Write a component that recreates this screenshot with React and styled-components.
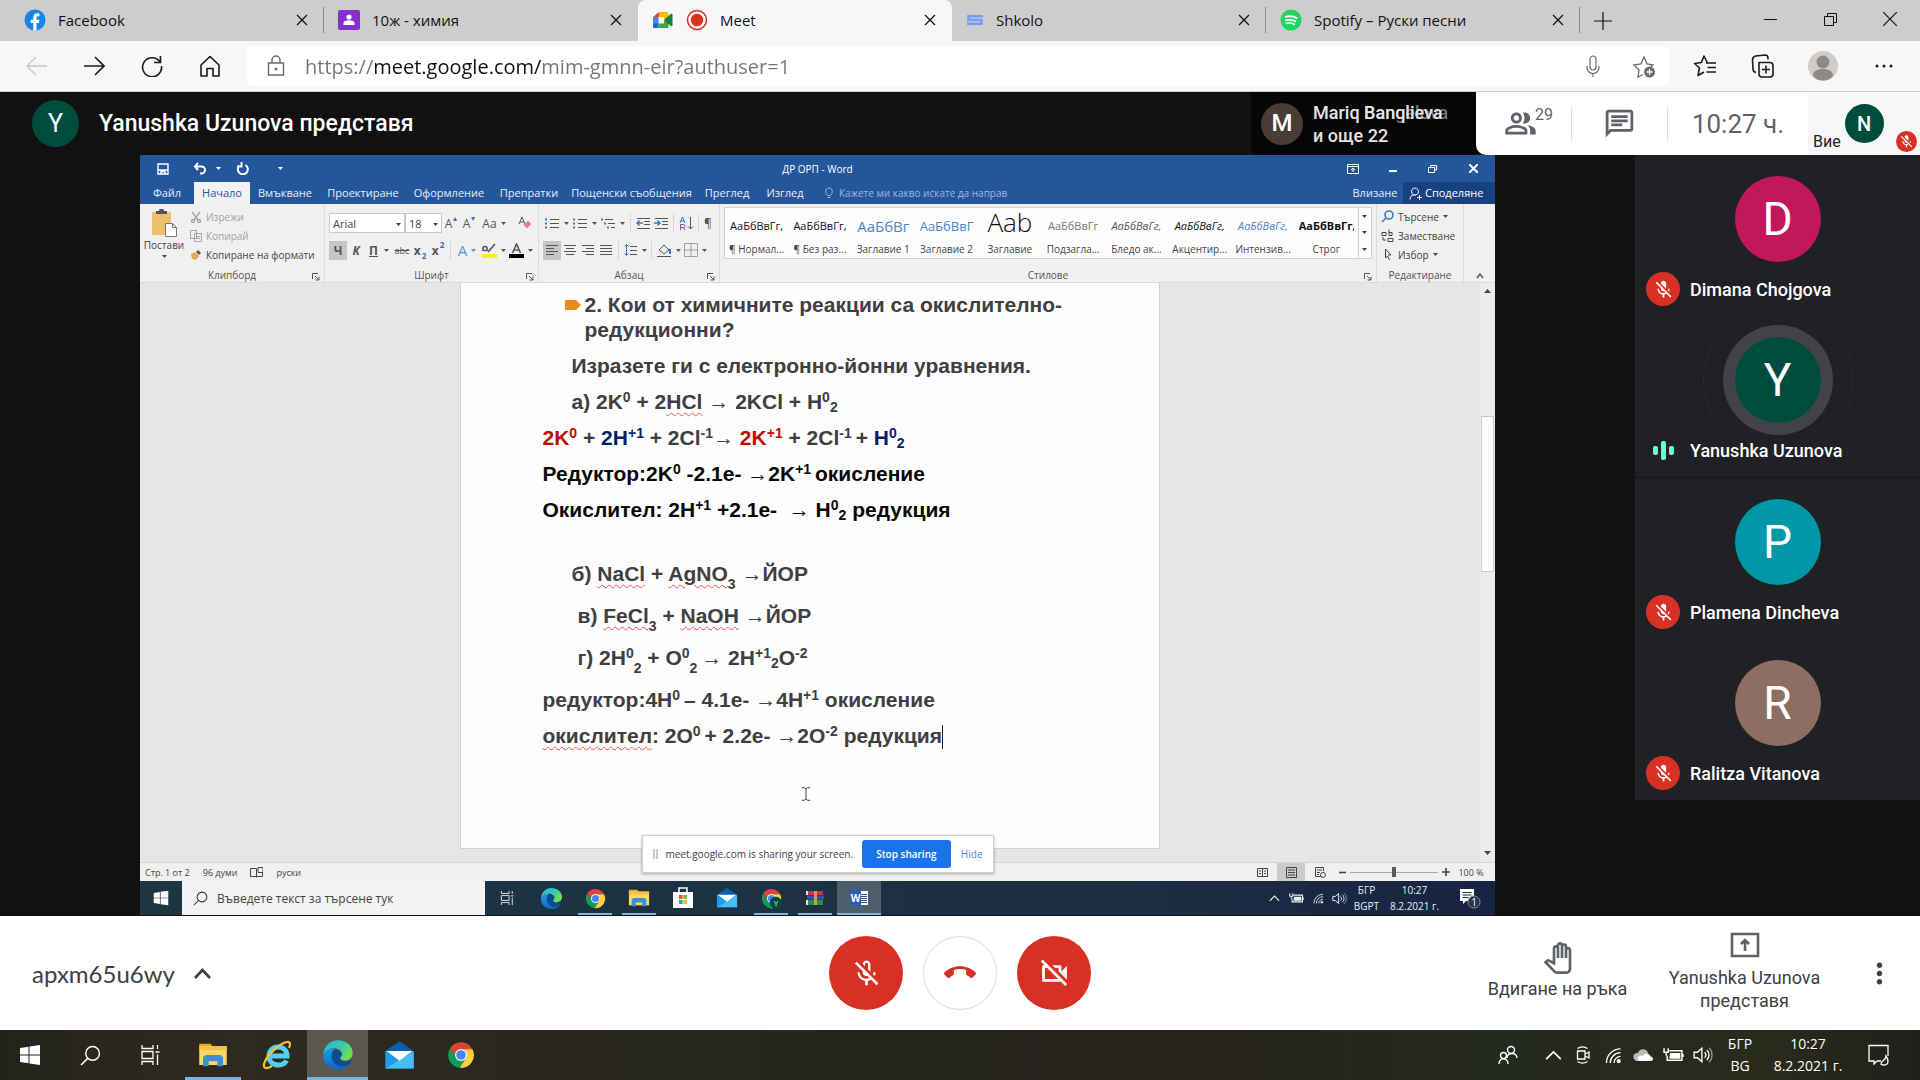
import React from 'react';
import styled, { createGlobalStyle, css } from 'styled-components';
import {
  MdOutlineMicOff,
  MdMicOff,
  MdCallEnd,
  MdOutlineVideocamOff,
  MdOutlinePeopleAlt,
  MdOutlineChat,
  MdMoreVert,
  MdOutlinePanTool,
} from 'react-icons/md';

const ui = `'Open Sans', 'Noto Sans', sans-serif`;
const meet = `Roboto, 'Liberation Sans', sans-serif`;

const GlobalStyle = createGlobalStyle`
  * {
    box-sizing: border-box;
  }

  body {
    margin: 0;
    background: #111;
    font-family: ${ui};
  }

  button, input, select {
    font: inherit;
    color: inherit;
    margin: 0;
    padding: 0;
    border: none;
    border-radius: 0;
    background: none;
    outline: none;
  }

  h1, h2, p, ul {
    margin: 0;
    padding: 0;
    font-weight: inherit;
    font-size: inherit;
  }

  a {
    color: inherit;
    text-decoration: none;
  }
`;

const Screen = styled.div`
  display: flex;
  flex-direction: column;
  min-height: 100vh;
`;

const Line = styled.svg`
  display: block;
  flex: none;
  fill: none;
  stroke: currentColor;
  stroke-width: ${(p) => p.$stroke || 1};
  stroke-linejoin: ${(p) => (p.$round ? 'round' : 'miter')};
`;

const Logo = styled.svg`
  display: block;
  flex: none;
`;

const Icon = ({ d, size = 20, box = 20, stroke, round, children }) => (
  <Line width={size} height={size} viewBox={`0 0 ${box} ${box}`} $stroke={stroke} $round={round}>
    {d && <path d={d} />}
    {children}
  </Line>
);

/* ---------- logos ---------- */

const EdgeLogo = ({ size = 32, id }) => (
  <Logo width={size} height={size} viewBox="0 0 24 24">
    <defs>
      <linearGradient id={`${id}a`} x1="0" y1="0" x2="1" y2="0.5">
        <stop offset="0" stopColor="#2bb3e6" />
        <stop offset="0.6" stopColor="#36c9b4" />
        <stop offset="1" stopColor="#6fe04d" />
      </linearGradient>
      <linearGradient id={`${id}b`} x1="0" y1="0" x2="0.4" y2="1">
        <stop offset="0" stopColor="#1b9de2" />
        <stop offset="1" stopColor="#1464c0" />
      </linearGradient>
    </defs>
    <path fill="#0c4a91" d="M9 8c3.500 0 5.500 1.500 6 4-1 1.500-1.500 3 0 4 2 1.200 5 1 6.500-.200 1 .300.600 1.200 0 2.200-2.500 3-8 4-12 1C6 16 6 10 9 8z" />
    <path fill={`url(#${id}b)`} d="M1 12.500C1 9.300 5 7 9.500 7.400 7.300 9 6.600 12 7.500 15c1.200 3.600 4.300 5.500 7.500 5.500 2.700 0 4.900-.8 6.500-2.500C19.500 21.200 16 23 12 23 6 23 1 18.500 1 12.500z" />
    <path fill={`url(#${id}a)`} d="M12 1c6.200 0 11 4.400 11 9.500 0 3.500-2.700 5.700-5.800 5.700-2.700 0-3.900-1.100-3.400-2.300.6-.8 1.200-1.500 1.200-2.600C15 8.900 12.500 7 9 7c-4.500 0-8 3-8 5.500C.8 6 5.700 1 12 1z" />
  </Logo>
);

const ChromeLogo = ({ size = 26, badge }) => (
  <Logo width={size} height={size} viewBox="0 0 24 24">
    <path fill="#db4437" d="M12 7h9.800A11 11 0 0 0 2.600 6.300L7.700 14.500A5 5 0 0 1 12 7z" />
    <path fill="#0f9d58" d="M2.600 6.300A11 11 0 0 0 11 23l5.300-8.500a5 5 0 0 1-8.600 0z" />
    <path fill="#ffcd40" d="M21.800 7A11 11 0 0 1 11 23l5.300-8.500A5 5 0 0 0 12 7z" />
    <circle cx="12" cy="12" r="5.200" fill="#fff" />
    <circle cx="12" cy="12" r="4.100" fill="#4285f4" />
    {badge && <circle cx="17" cy="17" r="7" fill="#004d40" />}
    {badge && <text x="17" y="20" fontSize="9" textAnchor="middle" fill="#cfe">{badge}</text>}
  </Logo>
);

const FolderLogo = ({ size = 30 }) => (
  <Logo width={size} height={size} viewBox="0 0 24 24">
    <path fill="#e9a820" d="M1 3h9l2 2.500H1z" />
    <path fill="#fdd663" d="M1 5h22v15H1z" />
    <path fill="#f7c242" d="M1 5h22v3H1z" />
    <path fill="#3c8fd0" d="M4 21v-7.500L6 12h12l2 1.500V21h-4.500v-4h-7v4z" />
  </Logo>
);

const MailLogo = ({ size = 32 }) => (
  <Logo width={size} height={size} viewBox="0 0 24 24">
    <path fill="#0a5fb4" d="M12 1l11 7.500H1z" />
    <path fill="#1e9be8" d="M1 8.500h22V22H1z" />
    <path fill="#46bdf2" d="M1 22L23 9v13z" />
    <path fill="#fff" d="M2 8.500h20L12 16z" />
  </Logo>
);

const ExplorerLogo = () => (
  <Logo width="32" height="32" viewBox="0 0 32 32">
    <path fill="none" stroke="#4fd0f5" strokeWidth="5" d="M8 17h18c0-6-4-9-9-9-5.500 0-9 4-9 9 0 5.500 4 9 9.500 9 3.500 0 6.500-1.500 8-4.500" />
    <path fill="none" stroke="#f4c430" strokeWidth="2.200" d="M28 9c2-4 1-6.500-2-6C19 4 5 17 3 25c-1 5 3 5 8 2" />
  </Logo>
);

const WindowsLogo = ({ size = 22 }) => (
  <Logo width={size} height={size} viewBox="0 0 22 22">
    <path fill="#fff" d="M1 4l8.500-1.300v7.800H1zM10.500 2.500L21 1v9.500H10.500zM1 11.500h8.500v7.800L1 18zM10.500 11.500H21V21l-10.500-1.500z" />
  </Logo>
);

const StoreLogo = () => (
  <Logo width="24" height="24" viewBox="0 0 24 24">
    <path fill="none" stroke="#fff" strokeWidth="1.600" d="M8 7V2h8v5" />
    <path fill="#fff" d="M2 6h20v16H2z" />
    <path fill="#e8572a" d="M8 9h3.600v4H8z" />
    <path fill="#7db83b" d="M12.400 9H16v4h-3.600z" />
    <path fill="#1f9bd8" d="M8 14h3.600v4H8z" />
    <path fill="#f5b51d" d="M12.400 14H16v4h-3.600z" />
  </Logo>
);

const ArchiveLogo = () => (
  <Logo width="20" height="20" viewBox="0 0 20 20">
    <path fill="#b73a4e" d="M1 3h17v4H1z" />
    <path fill="#3d4fae" d="M2 7.500h17v4H2z" />
    <path fill="#2c8a4b" d="M1 12h17v5H1z" />
    <path fill="#c9a24a" d="M9 3h3v14H9z" />
    <path fill="#dfe3ea" d="M1 3h2v4H1zM1 12h2v5H1z" />
  </Logo>
);

const WordLogo = () => (
  <Logo width="20" height="20" viewBox="0 0 20 20">
    <path fill="#f4f7fb" d="M10 3h9v14h-9z" />
    <path stroke="#2b579a" fill="none" d="M12 6.500h6M12 8.500h6M12 10.500h6M12 12.500h6M12 14.500h6" />
    <path fill="#2b5fb0" d="M1 2.500L12 0v20L1 17.500z" />
    <text x="6.500" y="14" fontSize="10" fontWeight="700" textAnchor="middle" fill="#fff">W</text>
  </Logo>
);

const FacebookLogo = () => (
  <Logo width="22" height="22" viewBox="0 0 22 22">
    <circle cx="11" cy="11" r="10.500" fill="#1384f2" />
    <path fill="#fff" d="M9.300 21.400v-7.500H6.600v-3.100h2.700V8.500c0-2.800 1.600-4.200 4-4.200.9 0 1.700.1 2.200.2v2.700h-1.500c-1.200 0-1.500.7-1.500 1.600v2h2.900l-.5 3.100h-2.400v7.500a10 10 0 0 1-3.200 0z" />
  </Logo>
);

const ClassLogo = () => (
  <Logo width="22" height="22" viewBox="0 0 22 22">
    <rect x="0" y="1" width="22" height="20" rx="2" fill="#8430ce" />
    <circle cx="11" cy="8" r="2.600" fill="#fff" />
    <path fill="#fff" d="M5.500 16v-2c0-1.800 3-2.800 5.500-2.800s5.500 1 5.500 2.800v2z" />
  </Logo>
);

const MeetLogo = () => (
  <Logo width="22" height="22" viewBox="0 0 22 22">
    <path fill="#ea4335" d="M1 8l6-5v5z" />
    <path fill="#fbbc04" d="M7 3h8c1 0 1.500.6 1.500 1.500V9L12 11V8H7z" />
    <path fill="#4285f4" d="M1 8h5.500v7H1z" />
    <path fill="#1967d2" d="M1 14.500h5.500V19H2.500C1.500 19 1 18.500 1 17.500z" />
    <path fill="#34a853" d="M6.500 14.500H12v-3l4.500 2v4c0 1-.5 1.500-1.500 1.500H6.500z" />
    <path fill="#188038" d="M12 11l6.700-6c.7-.6 1.800-.3 1.800.8v10.500c0 1-1.100 1.300-1.800.7z" />
  </Logo>
);

const RecordLogo = () => (
  <Logo width="22" height="22" viewBox="0 0 22 22">
    <circle cx="11" cy="11" r="9.500" fill="none" stroke="#d93025" strokeWidth="1.500" />
    <circle cx="11" cy="11" r="6.200" fill="#d93025" />
  </Logo>
);

const ShkoloLogo = () => (
  <Logo width="18" height="18" viewBox="0 0 18 18">
    <path fill="none" stroke="#6f9df7" strokeWidth="2.600" d="M17 5.300H2.500V9h13v3.700H1" />
  </Logo>
);

const SpotifyLogo = () => (
  <Logo width="22" height="22" viewBox="0 0 22 22">
    <circle cx="11" cy="11" r="10.500" fill="#1ed760" />
    <path fill="none" stroke="#fff" strokeLinecap="round" strokeWidth="1.900" d="M5.500 7.800c3.600-1 7.800-.7 11 1.200M6 11.200c3-.9 6.500-.5 9.300 1.100M6.500 14.300c2.500-.7 5.200-.4 7.600 1" />
  </Logo>
);

/* ---------- browser ---------- */

const TabStrip = styled.nav`
  display: flex;
  align-items: flex-end;
  height: 41px;
  padding-left: 10px;
  background: #cdcdcd;
  font-size: 15px;
  color: #111;
`;

const Tab = styled.div`
  display: flex;
  align-items: center;
  gap: 12px;
  flex: 0 1 314px;
  min-width: 0;
  height: 41px;
  padding: 0 12px 2px 14px;
  ${(p) =>
    p.$active &&
    css`
      background: #f7f7f7;
      border-radius: 8px 8px 0 0;
    `}
`;

const TabTitle = styled.a`
  flex: 1;
  white-space: nowrap;
  overflow: hidden;
`;

const TabDivider = styled.i`
  width: 1px;
  height: 26px;
  margin: 0 0 8px -1px;
  background: #8c8c8c;
`;

const PlainButton = styled.button`
  display: flex;
  align-items: center;
  justify-content: center;
  flex: none;
  width: ${(p) => p.$w || 20}px;
  height: ${(p) => p.$h || 38}px;
  color: ${(p) => p.$color || 'inherit'};
`;

const WindowButtons = styled.div`
  display: flex;
  margin-left: auto;
  align-self: flex-start;
`;

const Toolbar = styled.div`
  display: flex;
  align-items: center;
  height: 51px;
  padding: 0 6px 0 7px;
  background: #f7f7f7;
  border-bottom: 1px solid #d0d0d0;
  color: #1b1b1b;
`;

const AddressBar = styled.form`
  display: flex;
  align-items: center;
  flex: 1;
  height: 40px;
  margin: 0 7px 0 8px;
  padding-left: 18px;
  border-radius: 6px;
  background: #fff;
  color: #6b6b6b;
`;

/* host part of the address is darker than the rest */
const Address = styled.input`
  flex: 1;
  min-width: 0;
  margin-left: 18px;
  height: 38px;
  font-size: 20px;
  color: transparent;
  background: linear-gradient(90deg, #757575 69px, #111 69px, #111 237px, #757575 237px);
  background-clip: text;
  -webkit-background-clip: text;
`;

const tabs = [
  { title: 'Facebook', logo: <FacebookLogo />, divider: true },
  { title: '10ж - химия', logo: <ClassLogo /> },
  { title: 'Meet', logo: <MeetLogo />, extra: <RecordLogo />, active: true },
  { title: 'Shkolo', logo: <ShkoloLogo />, divider: true },
  { title: 'Spotify – Руски песни', logo: <SpotifyLogo />, divider: true },
];

const cross = 'M1 1l10 10M11 1L1 11';

function Browser() {
  return (
    <header>
      <TabStrip>
        {tabs.map((tab) => (
          <React.Fragment key={tab.title}>
            <Tab $active={tab.active}>
              {tab.logo}
              {tab.extra}
              <TabTitle href="#">{tab.title}</TabTitle>
              <PlainButton aria-label="Затваряне на раздела">
                <Icon d={cross} size={12} box={12} stroke={1.3} />
              </PlainButton>
            </Tab>
            {tab.divider && <TabDivider />}
          </React.Fragment>
        ))}
        <PlainButton $w={46} $h={41} aria-label="Нов раздел">
          <Icon d="M9 0v18M0 9h18" size={18} box={18} stroke={1.2} />
        </PlainButton>
        <WindowButtons>
          <PlainButton $w={60} aria-label="Намаляване">
            <Icon d="M0 6.500h13" size={13} box={13} />
          </PlainButton>
          <PlainButton $w={60} aria-label="Възстановяване">
            <Icon d="M.5 3.500h9v9h-9zM3.500 3.500v-3h9v9h-3" size={13} box={13} />
          </PlainButton>
          <PlainButton $w={60} aria-label="Затваряне">
            <Icon d="M0 0l14 14M14 0L0 14" size={14} box={14} stroke={1.2} />
          </PlainButton>
        </WindowButtons>
      </TabStrip>
      <Toolbar>
        <PlainButton $w={58} $color="#c8c8c8" aria-label="Назад">
          <Icon d="M22 11H2M11 2l-9 9 9 9" size={22} box={22} stroke={1.4} />
        </PlainButton>
        <PlainButton $w={58} aria-label="Напред">
          <Icon d="M1 11h20M12 2l9 9-9 9" size={22} box={22} stroke={1.6} />
        </PlainButton>
        <PlainButton $w={58} aria-label="Презареждане">
          <Icon d="M19 7A9.500 9.500 0 1 0 20.500 11M19.500 1v6.500H13" size={22} box={22} stroke={1.6} />
        </PlainButton>
        <PlainButton $w={58} aria-label="Начало">
          <Icon d="M2 10L11 1.500l9 8.500v11h-6v-7.500H8V21H2z" size={22} box={22} stroke={1.6} round />
        </PlainButton>
        <AddressBar>
          <Icon size={22} box={22} stroke={1.4} d="M3.500 8h15v12h-15zM7 8V5a4 4 0 0 1 8 0v3">
            <circle cx="11" cy="14" r=".8" fill="currentColor" />
          </Icon>
          <Address aria-label="Адрес" defaultValue="https://meet.google.com/mim-gmnn-eir?authuser=1" />
          <PlainButton $w={51} type="button" aria-label="Микрофон">
            <Icon size={22} box={22} stroke={1.2} d="M8 4a3 3 0 0 1 6 0v8a3 3 0 0 1-6 0zM5 11v1.500a6 6 0 0 0 12 0V11M11 18.500V22" />
          </PlainButton>
          <PlainButton $w={51} type="button" aria-label="Добавяне в любими">
            <Icon size={24} box={24} stroke={1.3}>
              <path d="M11 20.500l-5 2.500 1-7-5-5 7-1 3-7 3 7 6 1-3 3" />
              <circle cx="17.500" cy="18" r="5.500" fill="currentColor" stroke="none" />
              <path d="M17.500 15v6M14.500 18h6" stroke="#fff" />
            </Icon>
          </PlainButton>
        </AddressBar>
        <PlainButton $w={58} aria-label="Любими">
          <Icon size={24} box={24} stroke={1.6} round d="M14.500 9L11 2 8.300 8.500 1.500 9.500 6.500 14 5 21.500l6-3.500M13 9h10M14.500 13.500H23M13.500 18H23" />
        </PlainButton>
        <PlainButton $w={58} aria-label="Колекции">
          <Icon size={24} box={24} stroke={1.6} round d="M8 8.500h11c2 0 3 1 3 3V20c0 2-1 3-3 3h-8c-2 0-3-1-3-3zM15 11.500v8M11 15.500h8M5 18.500c-2-.5-3-2-3-3.500L1.500 6c0-2 1-3.500 3-4L14 1c1.500 0 3 1 3 3v1.500" />
        </PlainButton>
        <PlainButton $w={61} aria-label="Профил">
          <Logo width="30" height="30" viewBox="0 0 30 30">
            <circle cx="15" cy="15" r="15" fill="#cfccca" />
            <circle cx="15" cy="11" r="6.500" fill="#8f8a86" />
            <path fill="#8f8a86" d="M5 25c0-5 4-7 10-7s10 2 10 7c-5 6-15 6-20 0z" />
          </Logo>
        </PlainButton>
        <PlainButton $w={61} aria-label="Още">
          <Icon size={20} box={20}>
            <g fill="currentColor" stroke="none">
              <circle cx="3" cy="10" r="1.500" />
              <circle cx="10" cy="10" r="1.500" />
              <circle cx="17" cy="10" r="1.500" />
            </g>
          </Icon>
        </PlainButton>
      </Toolbar>
    </header>
  );
}

/* ---------- meet header ---------- */

const MeetHeader = styled.div`
  display: flex;
  align-items: stretch;
  height: 63px;
  background: #111;
  font-family: ${meet};
`;

const Avatar = styled.span`
  display: flex;
  align-items: center;
  justify-content: center;
  flex: none;
  width: ${(p) => p.$size}px;
  height: ${(p) => p.$size}px;
  border-radius: 50%;
  background: ${(p) => p.$color};
  color: #fff;
  font-size: ${(p) => p.$font}px;
  font-weight: ${(p) => p.$weight || 400};
`;

const Presenter = styled.h1`
  display: flex;
  align-items: center;
  gap: 20px;
  padding-left: 32px;
  color: #fff;
  font-size: 23px;
  font-weight: 500;
`;

const MoreTile = styled.div`
  display: flex;
  align-items: center;
  gap: 10px;
  width: 225px;
  margin-left: auto;
  padding-left: 10px;
  border-radius: 0 0 0 8px;
  background: #060606;
  color: #e3e3e3;
  font-size: 18px;
  font-weight: 500;
  line-height: 23px;
`;

/* old name fading out under the new one */
const Swap = styled.span`
  position: relative;

  span {
    position: absolute;
    left: 0;
    top: -1px;
    opacity: 0.5;
  }
`;

const InfoPanel = styled.div`
  display: flex;
  align-items: center;
  width: 332px;
  border-radius: 0 0 0 10px;
  background: #fff;
  color: #5f6368;
  box-shadow: -10px 0 0 -1px #060606;
`;

const InfoButton = styled.button`
  display: flex;
  align-items: center;
  justify-content: center;
  width: 96px;
  height: 34px;
  padding-left: ${(p) => (p.$counted ? 10 : 0)}px;
  border-right: 1px solid #e0e0e0;

  sup {
    align-self: flex-start;
    margin-left: -2px;
    font-size: 16px;
    line-height: 16px;
  }
`;

const Clock = styled.time`
  flex: 1;
  text-align: center;
  font-size: 26px;
`;

const SelfTile = styled.div`
  display: flex;
  align-items: center;
  gap: 4px;
  position: relative;
  width: 112px;
  padding-left: 5px;
  background: #f6f7f9;
  color: #202124;
  font-size: 16px;

  b {
    align-self: flex-end;
    padding-bottom: 4px;
    font-weight: 400;
  }
`;

const MutedBadge = styled.span`
  display: flex;
  align-items: center;
  justify-content: center;
  flex: none;
  width: ${(p) => p.$size}px;
  height: ${(p) => p.$size}px;
  border-radius: 50%;
  background: #d93025;
  color: #fff;
`;

const CornerBadge = styled(MutedBadge)`
  position: absolute;
  right: 3px;
  bottom: 3px;
`;

function MeetTop() {
  return (
    <MeetHeader>
      <Presenter>
        <Avatar $size={47} $color="#004d40" $font={25}>Y</Avatar>
        Yanushka Uzunova представя
      </Presenter>
      <MoreTile>
        <Avatar $size={42} $color="#4a3b35" $font={24} $weight={500}>M</Avatar>
        <div>
          Mariq <Swap>Banqlieva<span>Bangelova</span></Swap>
          <br />и още 22
        </div>
      </MoreTile>
      <InfoPanel>
        <InfoButton $counted>
          <MdOutlinePeopleAlt size={33} />
          <sup>29</sup>
        </InfoButton>
        <InfoButton aria-label="Чат">
          <MdOutlineChat size={33} />
        </InfoButton>
        <Clock>10:27 ч.</Clock>
      </InfoPanel>
      <SelfTile>
        <b>Вие</b>
        <Avatar $size={39} $color="#004d40" $font={20} $weight={500}>N</Avatar>
        <CornerBadge $size={21}><MdMicOff size={15} /></CornerBadge>
      </SelfTile>
    </MeetHeader>
  );
}

/* ---------- participants ---------- */

const People = styled.aside`
  width: 285px;
  font-family: ${meet};
`;

const Person = styled.div`
  position: relative;
  display: flex;
  flex-direction: column;
  align-items: center;
  height: 161px;
  padding-top: 21px;
  background: #202124;
  overflow: hidden;

  &:nth-child(3) {
    height: 162px;
    border-top: 1px solid #151618;
  }

  ${(p) =>
    p.$talking &&
    css`
      > :first-child {
        box-shadow: 0 0 0 12px #414347;
        outline: 1px solid #292b2e;
        outline-offset: 31px;
      }
    `}
`;

const PersonName = styled.div`
  display: flex;
  align-items: center;
  align-self: stretch;
  gap: 10px;
  height: 36px;
  margin-top: 9px;
  padding-left: 11px;
  color: #fff;
  font-size: 18px;
  font-weight: 500;
`;

const Talking = styled.span`
  display: flex;
  align-items: center;
  justify-content: center;
  gap: 3px;
  width: 34px;

  i {
    width: 5px;
    height: 9px;
    border-radius: 2px;
    background: #64ffda;
  }

  i:nth-child(2) {
    height: 19px;
  }
`;

const people = [
  { name: 'Dimana Chojgova', color: '#c2185b' },
  { name: 'Yanushka Uzunova', color: '#004d40', talking: true },
  { name: 'Plamena Dincheva', color: '#0097a7' },
  { name: 'Ralitza Vitanova', color: '#8d6e63' },
];

/* ---------- shared screen: word ---------- */

const Stage = styled.main`
  display: flex;
  flex: 1;
  background: #111;
`;

const Shared = styled.section`
  position: relative;
  display: flex;
  flex-direction: column;
  flex: 1;
  min-width: 0;
  margin: 0 140px 1px;
  font-size: 11px;
  color: #444;
`;

const TitleBar = styled.div`
  display: flex;
  align-items: center;
  height: 27px;
  padding: 0 2px;
  background: #24569c;
  color: #fff;
  font-size: 10px;
`;

const TitleSide = styled.div`
  display: flex;
  align-items: center;
  flex: 1;
  justify-content: ${(p) => (p.$end ? 'flex-end' : 'flex-start')};
`;

const RibbonTabs = styled.div`
  display: flex;
  height: 22px;
  background: #24569c;
  color: #e8eef7;
  line-height: 20px;
`;

const RibbonTab = styled.button`
  flex: none;
  width: ${(p) => p.$w}px;
  white-space: nowrap;
  background: ${(p) => (p.$active ? '#f3f2f3' : 'transparent')};
  color: ${(p) => (p.$active ? '#24569c' : 'inherit')};
`;

const TellMe = styled.label`
  display: flex;
  align-items: center;
  gap: 4px;
  margin-left: 10px;
  color: #9db8de;
  font-size: 10px;

  input {
    width: 180px;
  }

  input::placeholder {
    color: #9db8de;
    opacity: 1;
  }
`;

const Account = styled.div`
  display: flex;
  margin-left: auto;
`;

const ShareButton = styled.button`
  display: flex;
  align-items: center;
  gap: 3px;
  width: 92px;
  padding-left: 6px;
  background: #174282;
  color: #fff;
`;

const Ribbon = styled.div`
  display: flex;
  height: 79px;
  background: #f1f0f1;
  border-bottom: 1px solid #dadada;
`;

const Group = styled.div`
  display: flex;
  flex-direction: column;
  justify-content: space-between;
  flex: ${(p) => (p.$grow ? '1 1 0' : 'none')};
  min-width: 0;
  width: ${(p) => p.$w}px;
  padding: 3px 4px 0;
  border-right: 1px solid #dcdcdc;
`;

const GroupLabel = styled.div`
  position: relative;
  height: 13px;
  text-align: center;
  font-size: 10px;
  line-height: 12px;
  color: #555;

  svg {
    position: absolute;
    right: 0;
    top: 4px;
  }
`;

const Row = styled.div`
  display: flex;
  align-items: center;
  height: ${(p) => p.$h || 22}px;
`;

const Tool = styled.button`
  display: flex;
  align-items: center;
  justify-content: center;
  gap: ${(p) => p.$gap || 1}px;
  flex: none;
  width: ${(p) => p.$w || 18}px;
  height: 19px;
  background: ${(p) => (p.$on ? '#c6c6c6' : 'none')};
  color: ${(p) => p.$color || '#555'};
  font-size: ${(p) => p.$font || 12}px;
  font-weight: ${(p) => (p.$bold ? 700 : 400)};
  font-style: ${(p) => (p.$italic ? 'italic' : 'normal')};
  text-decoration: ${(p) => p.$line || 'none'};

  sub, sup {
    font-size: 8px;
    line-height: 8px;
    color: #3a6fb5;
  }

  sup {
    align-self: flex-start;
  }

  sub {
    align-self: flex-end;
  }
`;

const Rule = styled.i`
  width: 1px;
  height: 18px;
  margin: 0 3px;
  background: #d6d6d6;
`;

const Select = styled.select`
  appearance: none;
  width: ${(p) => p.$w}px;
  height: 20px;
  padding-left: 3px;
  border: 1px solid #c9c9c9;
  background: #fff;
`;

const SelectWrap = styled.span`
  position: relative;
  display: flex;

  svg {
    position: absolute;
    right: 4px;
    top: 9px;
  }
`;

const Clipboard = styled.div`
  display: flex;
  gap: 6px;
`;

const Paste = styled.button`
  display: flex;
  flex-direction: column;
  align-items: center;
  width: 40px;
  padding-top: 2px;
  font-size: 10px;
  line-height: 17px;
`;

const Command = styled.button`
  display: flex;
  align-items: center;
  gap: 4px;
  height: 19px;
  color: ${(p) => (p.$off ? '#a3a3a3' : '#444')};
  font-size: 10px;
  white-space: nowrap;
`;

const Gallery = styled.div`
  display: flex;
  height: 52px;
  border: 1px solid #d0d0d0;
  background: #fdfdfd;
`;

const StyleItem = styled.button`
  flex: 1 1 0;
  min-width: 0;
  padding: 0 4px;
  overflow: hidden;
  white-space: nowrap;

  span {
    display: block;
    height: 32px;
    overflow: hidden;
    font-size: ${(p) => p.$font || 11}px;
    line-height: ${(p) => p.$lh || 36}px;
    color: ${(p) => p.$color || '#111'};
    font-style: ${(p) => (p.$italic ? 'italic' : 'normal')};
    font-weight: ${(p) => p.$weight || 400};
  }

  small {
    display: block;
    font-size: 10px;
    line-height: 18px;
  }
`;

const GalleryScroll = styled.div`
  display: flex;
  flex-direction: column;
  justify-content: space-around;
  align-items: center;
  width: 13px;
  border-left: 1px solid #d0d0d0;
`;

const Canvas = styled.div`
  display: flex;
  justify-content: center;
  align-items: flex-start;
  flex: 1;
  padding-left: 15px;
  background: #e6e6e6;
`;

const PageColumn = styled.div`
  display: flex;
  flex: 1;
  justify-content: center;
  align-self: stretch;
  padding: 0 16px 13px 0;
`;

const Page = styled.article`
  width: 700px;
  padding: 9px 0 0 82px;
  border: 1px solid #d2d2d2;
  border-top: none;
  background: #fdfdfe;
  color: #3f3f3f;
  font: bold 21px 'Liberation Sans', Arial, sans-serif;
`;

const Heading = styled.h2`
  display: flex;
  gap: 4px;
  margin: 0 0 6px 22px;
  font-weight: bold;
  line-height: 25px;

  svg {
    margin-top: 7px;
  }
`;

const Para = styled.p`
  height: 36px;
  margin-left: ${(p) => p.$indent || 0}px;
  margin-top: ${(p) => p.$gap || 0}px;
  color: ${(p) => p.$color || 'inherit'};
  font-weight: bold;
  line-height: 36px;
  white-space: pre;

  sup, sub {
    font-size: 14px;
    line-height: 0;
  }

  sup {
    vertical-align: 7px;
  }

  sub {
    vertical-align: -3px;
  }
`;

const Low = styled.sub`
  && {
    vertical-align: -8px;
  }
`;

const Ink = styled.span`
  color: ${(p) => p.$color};
`;

const Typo = styled.span`
  text-decoration: underline wavy #e2574c 1px;
  text-underline-offset: 3px;
`;

const Arrow = styled.span`
  font-family: 'Liberation Serif', serif;
  font-weight: 400;
  line-height: 0;
`;

const Caret = styled.i`
  display: inline-block;
  width: 1px;
  height: 24px;
  vertical-align: middle;
  background: #222;
`;

const ScrollTrack = styled.div`
  display: flex;
  flex-direction: column;
  align-items: center;
  align-self: stretch;
  width: 15px;
  padding: 5px 0;
  background: #ececec;
`;

const ScrollThumb = styled.i`
  width: 13px;
  height: 156px;
  margin: 121px 0 auto;
  border: 1px solid #ccc;
  background: #fff;
`;

const Pointer = styled.div`
  position: absolute;
  left: 659px;
  top: 632px;
  color: #444;
`;

const SharingBar = styled.div`
  position: absolute;
  left: 50%;
  bottom: 42px;
  transform: translateX(-50%);
  display: flex;
  align-items: center;
  width: 352px;
  height: 38px;
  padding: 0 10px;
  border: 1px solid #cfcfcf;
  background: #fff;
  box-shadow: 0 1px 3px rgba(0, 0, 0, 0.3);
  color: #3c4043;
  font-size: 10px;
  white-space: nowrap;

  a {
    margin-left: 10px;
    color: #4a8ae8;
  }
`;

const StopButton = styled.button`
  flex: none;
  width: 89px;
  height: 28px;
  margin-left: auto;
  border-radius: 3px;
  background: #1a73e8;
  color: #fff;
  font-weight: 600;
`;

const Grip = styled.i`
  width: 5px;
  height: 10px;
  margin-right: 8px;
  border: solid #ccc;
  border-width: 0 2px;
`;

const StatusBar = styled.div`
  display: flex;
  align-items: center;
  gap: 13px;
  height: 19px;
  padding: 0 7px 0 5px;
  border-top: 1px solid #d5d5d5;
  background: #f1f0f1;
  font-size: 9px;
`;

const ViewButton = styled.button`
  display: flex;
  align-items: center;
  justify-content: center;
  width: 28px;
  height: 18px;
  background: ${(p) => (p.$on ? '#cbcbcb' : 'none')};
`;

const ZoomBox = styled.div`
  display: flex;
  align-items: center;
  gap: ${(p) => p.$gap || 0}px;
  margin-left: auto;
`;

const Slider = styled.input`
  appearance: none;
  width: 88px;
  height: 12px;
  background: linear-gradient(#a5a5a5, #a5a5a5) center / 100% 1px no-repeat;

  &::-webkit-slider-thumb {
    appearance: none;
    width: 4px;
    height: 10px;
    background: #5a5a5a;
  }
`;

const down = (
  <Icon size={5} box={5}>
    <path d="M0 1h5L2.500 4z" fill="currentColor" stroke="none" />
  </Icon>
);
const corner = <Icon d="M.5 6V.5H6M3 3l4 4M7 3.500V7H3.500" size={8} box={8} />;
const arrow = <Arrow>→</Arrow>;

const lines = {
  bullets: 'M5 3.500h9M5 7.500h9M5 11.500h9',
  left: 'M1 2.500h12M1 5.500h8M1 8.500h12M1 11.500h8',
  center: 'M1 2.500h12M3 5.500h8M1 8.500h12M3 11.500h8',
  right: 'M1 2.500h12M5 5.500h8M1 8.500h12M5 11.500h8',
  justify: 'M1 2.500h12M1 5.500h12M1 8.500h12M1 11.500h12',
};

const ListIcon = ({ stepped }) => (
  <Icon size={15} box={15} d={stepped ? 'M4 3.500h8M7 7.500h7M10 11.500h4' : lines.bullets}>
    <path stroke="#3a7ac8" strokeWidth="2" d={stepped ? 'M0 3.500h2M3 7.500h2M6 11.500h2' : 'M0 3.500h2M0 7.500h2M0 11.500h2'} />
  </Icon>
);

const IndentIcon = ({ back }) => (
  <Icon size={15} box={15} d="M1 2.500h13M8 5.500h6M8 8.500h6M1 12.500h13">
    <path stroke="#3a7ac8" strokeWidth="1.500" d={back ? 'M7 7H1M3.500 4.500L1 7l2.500 2.500' : 'M0 7h6M3.500 4.500L6 7 3.500 9.500'} />
  </Icon>
);

const sample = 'АаБбВвГг,';
const styleItems = [
  { text: sample, name: '¶ Нормал...' },
  { text: sample, name: '¶ Без раз...' },
  { text: 'АаБбВг', name: 'Заглавие 1', font: 15, color: '#4a86c5' },
  { text: 'АаБбВвГ', name: 'Заглавие 2', font: 13, color: '#4a86c5' },
  { text: 'Ааb', name: 'Заглавие', font: 26, lh: 28, weight: 300 },
  { text: 'АаБбВвГг', name: 'Подзагла...', color: '#777' },
  { text: sample, name: 'Бледо ак...', color: '#555', italic: true },
  { text: sample, name: 'Акцентир...', italic: true },
  { text: sample, name: 'Интензив...', color: '#4a86c5', italic: true },
  { text: sample, name: 'Строг', weight: 700 },
];

const ribbonTabs = [
  ['Файл', 54],
  ['Начало', 56, true],
  ['Вмъкване', 70],
  ['Проектиране', 86],
  ['Оформление', 86],
  ['Препратки', 74],
  ['Пощенски съобщения', 131],
  ['Преглед', 60],
  ['Изглед', 56],
];

function WordRibbon() {
  return (
    <>
      <TitleBar>
        <TitleSide>
          <PlainButton $w={42} $h={26} aria-label="Запис">
            <Icon size={12} box={12} stroke={1.4} d="M1 1h10v10H1zM1 7h10M4 11V8.500h4V11" />
          </PlainButton>
          <PlainButton $w={32} $h={26} aria-label="Отмяна">
            <Icon size={14} box={14} stroke={2} d="M5 1L2 4.500 5 8M2 4.500h6.500a3.500 3.500 0 0 1 0 7H7" />
          </PlainButton>
          {down}
          <PlainButton $w={42} $h={26} aria-label="Повтаряне">
            <Icon size={13} box={13} stroke={2} d="M3.500 3.500a5 5 0 1 0 6-.5M5.500 0v4.500H1" />
          </PlainButton>
          <PlainButton $w={34} $h={26} aria-label="Персонализиране">{down}</PlainButton>
        </TitleSide>
        <span>ДР ОРП - Word</span>
        <TitleSide $end>
          <PlainButton $w={40} $h={26} aria-label="Опции на лентата">
            <Icon size={12} box={12} d="M.5 1.500h11v9H.5zM.5 3.500h11M6 9V5M4 7l2-2 2 2" />
          </PlainButton>
          <PlainButton $w={40} $h={26} aria-label="Намаляване">
            <Icon size={8} box={8} stroke={2} d="M0 6h8" />
          </PlainButton>
          <PlainButton $w={40} $h={26} aria-label="Възстановяване">
            <Icon size={10} box={10} d="M.5 3.500h6v5h-6zM2.500 3V1.500h6V6H7" />
          </PlainButton>
          <PlainButton $w={40} $h={26} aria-label="Затваряне">
            <Icon size={9} box={9} stroke={2} d="M0 0l9 9M9 0L0 9" />
          </PlainButton>
        </TitleSide>
      </TitleBar>
      <RibbonTabs>
        {ribbonTabs.map(([name, w, active]) => (
          <RibbonTab key={name} $w={w} $active={active}>{name}</RibbonTab>
        ))}
        <TellMe>
          <Icon size={12} box={12} d="M4.500 8.500C2 6.500 2 1 6 1s4 5.500 1.500 7.500zM4.500 10.500h3" />
          <input aria-label="Помощ" placeholder="Кажете ми какво искате да направ" />
        </TellMe>
        <Account>
          <RibbonTab $w={56}>Влизане</RibbonTab>
          <ShareButton>
            <Icon size={13} box={13} d="M1 12.500c0-3 1.500-4.500 4-4.500h2M5.500 8a3.500 3.500 0 1 1 1 0M8 10.500h5M10.500 8v5" />
            Споделяне
          </ShareButton>
        </Account>
      </RibbonTabs>
      <Ribbon>
        <Group $w={185}>
          <Clipboard>
            <Paste>
              <Logo width="26" height="28" viewBox="0 0 26 28">
                <path fill="#edc06c" d="M1 3h19v23H1z" />
                <path fill="#555" d="M5 5V2h3a2.500 2.500 0 0 1 5 0h3v3z" />
                <path fill="#fff" stroke="#777" d="M14.500 14.500h7l4 4v9h-11zM21.500 14.500v4h4" />
              </Logo>
              Постави
              {down}
            </Paste>
            <div>
              <Command $off>
                <Icon size={12} box={12} stroke={1.3} d="M2 1l6 8M10 1L4 9"><circle cx="3" cy="10" r="1.500" /><circle cx="9" cy="10" r="1.500" /></Icon>
                Изрежи
              </Command>
              <Command $off>
                <Icon size={12} box={12} d="M.5.500h6v8h-6zM4.500 3.500h7v8h-7zM6 6.500h4M6 8.500h4" />
                Копирай
              </Command>
              <Command>
                <Logo width="12" height="12" viewBox="0 0 12 12">
                  <path fill="#e5a94f" d="M1 5l4-2 4 4-3 4-4-1z" />
                  <path fill="#555" d="M6 3l2-2 3 3-2 2z" />
                </Logo>
                Копиране на формати
              </Command>
            </div>
          </Clipboard>
          <GroupLabel>Клипборд{corner}</GroupLabel>
        </Group>
        <Group $w={214}>
          <div>
            <Row $h={32}>
              <SelectWrap>
                <Select $w={76} aria-label="Шрифт"><option>Arial</option></Select>
                {down}
              </SelectWrap>
              <SelectWrap>
                <Select $w={37} aria-label="Размер"><option>18</option></Select>
                {down}
              </SelectWrap>
              <Tool $w={18}>A<sup>▴</sup></Tool>
              <Tool $w={18}>A<sup>▾</sup></Tool>
              <Tool $w={32} $gap={4}>Aa{down}</Tool>
              <Rule />
              <Tool>
                <Icon size={14} box={14}>
                  <path d="M1 8l3-7 3 7M2 6h4" />
                  <path d="M6 9l4-4 3 3-4 4z" fill="#e8808c" stroke="#e8808c" />
                </Icon>
              </Tool>
            </Row>
            <Row>
              <Tool $on $bold>Ч</Tool>
              <Tool $bold $italic>К</Tool>
              <Tool $w={28} $gap={6} $bold><u>П</u>{down}</Tool>
              <Tool $font={9} $line="line-through">abc</Tool>
              <Tool $bold>x<sub>2</sub></Tool>
              <Tool $bold>x<sup>2</sup></Tool>
              <Rule />
              <Tool $w={26} $gap={4} $color="#5a93d6" $font={15}>A{down}</Tool>
              <Tool $w={27} $gap={4}>
                <Icon size={15} box={15}>
                  <path stroke="#f7ee1a" strokeWidth="4" d="M0 13h15" />
                  <path strokeWidth="1.600" d="M6 9l7-8M1 8V5c0-2 4-2 4 0v3M1.500 7.500H5" />
                </Icon>
                {down}
              </Tool>
              <Tool $w={27} $gap={4}>
                <Icon size={15} box={15}>
                  <path stroke="#000" strokeWidth="4" d="M0 13h15" />
                  <path strokeWidth="1.600" d="M3.500 10l4-9 4 9M5 7h5" />
                </Icon>
                {down}
              </Tool>
            </Row>
          </div>
          <GroupLabel>Шрифт{corner}</GroupLabel>
        </Group>
        <Group $w={181}>
          <div>
            <Row $h={32}>
              <Tool $w={28} $gap={4}><ListIcon />{down}</Tool>
              <Tool $w={28} $gap={4}><ListIcon />{down}</Tool>
              <Tool $w={28} $gap={4}><ListIcon stepped />{down}</Tool>
              <Rule />
              <Tool><IndentIcon back /></Tool>
              <Tool><IndentIcon /></Tool>
              <Rule />
              <Tool>
                <Icon size={15} box={15} d="M11.500 1v12M9 10.500l2.500 2.500 2.500-2.500">
                  <path stroke="#3a7ac8" d="M1 7l2.500-6L6 7M2 5h3" />
                  <path stroke="#8a4fa8" d="M1.500 14V8.500h3c2 0 2 3 0 3h-3M4 11.500L6 14" />
                </Icon>
              </Tool>
              <Rule />
              <Tool $w={12}>¶</Tool>
            </Row>
            <Row>
              <Tool $on><Icon size={14} box={14} d={lines.left} /></Tool>
              <Tool><Icon size={14} box={14} d={lines.center} /></Tool>
              <Tool><Icon size={14} box={14} d={lines.right} /></Tool>
              <Tool><Icon size={14} box={14} d={lines.justify} /></Tool>
              <Rule />
              <Tool $w={26} $gap={4}>
                <Icon size={14} box={14} d="M6 3.500h7M6 7.500h7M6 11.500h7">
                  <path stroke="#3a7ac8" d="M2.500 1.500v11M.5 3.500l2-2 2 2M.5 10.500l2 2 2-2" />
                </Icon>
                {down}
              </Tool>
              <Rule />
              <Tool $w={27} $gap={4}>
                <Icon size={15} box={15} d="M2 7l5-5 5 5-5 4zM0 13.500h14"><path stroke="#3a7ac8" strokeWidth="2" d="M13 6v5" /></Icon>
                {down}
              </Tool>
              <Tool $w={27} $gap={4}><Icon size={14} box={14} d="M.5.500h13v13H.5zM7 0v14M0 7h14" stroke={0.5} />{down}</Tool>
            </Row>
          </div>
          <GroupLabel>Абзац{corner}</GroupLabel>
        </Group>
        <Group $grow>
          <Gallery>
            {styleItems.map((s) => (
              <StyleItem key={s.name} $font={s.font} $lh={s.lh} $color={s.color} $italic={s.italic} $weight={s.weight}>
                <span>{s.text}</span>
                <small>{s.name}</small>
              </StyleItem>
            ))}
            <GalleryScroll>{down}{down}{down}</GalleryScroll>
          </Gallery>
          <GroupLabel>Стилове{corner}</GroupLabel>
        </Group>
        <Group $w={87}>
          <div>
            <Command>
              <Icon size={13} box={13} stroke={1.6}><g stroke="#3a7ac8"><circle cx="8" cy="5" r="4" /><path d="M5 8l-4 4" /></g></Icon>
              Търсене {down}
            </Command>
            <Command>
              <Icon size={13} box={13} d="M1 3.500h4v3H1zM8 .5v6h3v-3H8M2 8v3h3M7 9.500h5v3H7z" />
              Заместване
            </Command>
            <Command>
              <Icon size={13} box={13} d="M4.500 1v9l2-2 2 4M4.500 1l5.500 6H7" />
              Избор {down}
            </Command>
          </div>
          <GroupLabel>Редактиране</GroupLabel>
        </Group>
        <PlainButton $w={31} $h={144} aria-label="Свиване на лентата">
          <Icon size={8} box={8} stroke={1.3} d="M1 6l3-4 3 4" />
        </PlainButton>
      </Ribbon>
    </>
  );
}

function WordDocument() {
  return (
    <Canvas>
      <PageColumn>
        <Page>
          <Heading>
            <Logo width="16" height="12" viewBox="0 0 16 12"><path fill="#ea8a1f" d="M0 1h11l5 5-5 5H0z" /></Logo>
            <span>2. Кои от химичните реакции са окислително-<br />редукционни?</span>
          </Heading>
          <Para $indent={29}>Изразете ги с електронно-йонни уравнения.</Para>
          <Para $indent={29}>а) 2K<sup>0</sup> + 2<Typo>HCl</Typo> {arrow} 2KCl + H<sup>0</sup><sub>2</sub></Para>
          <Para>
            <Ink $color="#c00d00">2K<sup>0</sup></Ink> + <Ink $color="#001f6b">2H<sup>+1</sup></Ink> + 2Cl<sup>-1</sup>{arrow}{' '}
            <Ink $color="#c00d00">2K<sup>+1</sup></Ink> + 2Cl<sup>-1 </sup>+ <Ink $color="#001f6b">H<sup>0</sup><sub>2</sub></Ink>
          </Para>
          <Para $color="#080808">Редуктор:2K<sup>0</sup> -2.1e- {arrow}2K<sup>+1 </sup>окисление</Para>
          <Para $color="#080808">Окислител: 2H<sup>+1</sup> +2.1e-  {arrow} H<sup>0</sup><sub>2</sub> редукция</Para>
          <Para $indent={29} $gap={28}>б) <Typo>NaCl</Typo> + <Typo>AgNO<Low>3</Low></Typo> {arrow}ЙОР</Para>
          <Para $indent={35} $gap={6}>в) <Typo>FeCl<Low>3</Low></Typo> + <Typo>NaOH</Typo> {arrow}ЙОР</Para>
          <Para $indent={35} $gap={6}>г) 2H<sup>0</sup><Low>2</Low> + O<sup>0</sup><Low>2 </Low>{arrow} 2H<sup>+1</sup><sub>2</sub>O<sup>-2</sup></Para>
          <Para $gap={6}>редуктор:4H<sup>0 </sup>– 4.1e- {arrow}4H<sup>+1</sup> окисление</Para>
          <Para><Typo>окислител</Typo>: 2O<sup>0 </sup>+ 2.2e- {arrow}2O<sup>-2</sup> редукция<Caret /></Para>
        </Page>
      </PageColumn>
      <ScrollTrack>
        <Icon size={7} box={7}><path d="M0 5h7L3.500 1z" fill="currentColor" stroke="none" /></Icon>
        <ScrollThumb />
        <Icon size={7} box={7}><path d="M0 1h7L3.500 5z" fill="currentColor" stroke="none" /></Icon>
      </ScrollTrack>
    </Canvas>
  );
}

function WordStatus() {
  return (
    <StatusBar>
      <span>Стр. 1 от 2</span>
      <span>96 думи</span>
      <Icon size={13} box={13} d="M6.500 2.500v9M.5 2.500h6M.5 2.500v8h12v-4M8 1.500h5v5H8z" />
      <span>руски</span>
      <ZoomBox $gap={1}>
        <ViewButton aria-label="Четене"><Icon size={11} box={11} d="M.5 1.500h10v8H.5zM5.500 1v9M2 4h2M2 6.500h2M7 4h2M7 6.500h2" /></ViewButton>
        <ViewButton $on aria-label="Печат"><Icon size={11} box={11} d="M.5.500h10v10H.5zM2 3h7M2 5.500h7M2 8h7" /></ViewButton>
        <ViewButton aria-label="Уеб"><Icon size={11} box={11} d="M7 9.500H.5v-9h8V4M2 3h5M2 5.500h3M2 7.500h2"><circle cx="8" cy="8" r="2.500" /></Icon></ViewButton>
        <PlainButton $w={14} $h={18} aria-label="Намаляване на мащаба"><Icon size={7} box={7} stroke={1.6} d="M0 3.500h7" /></PlainButton>
        <Slider type="range" aria-label="Мащаб" defaultValue={50} />
        <PlainButton $w={14} $h={18} aria-label="Увеличаване на мащаба"><Icon size={8} box={8} stroke={1.6} d="M0 4h8M4 0v8" /></PlainButton>
        <PlainButton as="span" $w={34} $h={18}>100 %</PlainButton>
      </ZoomBox>
    </StatusBar>
  );
}

/* ---------- task bars ---------- */

const InnerTaskbar = styled.div`
  display: flex;
  align-items: stretch;
  height: 34px;
  background: linear-gradient(90deg, #1e3641, #1c2f42 70%, #172443);
  color: #e9eef2;
`;

const TaskButton = styled.button`
  position: relative;
  display: flex;
  align-items: center;
  justify-content: center;
  flex: none;
  width: ${(p) => p.$w || 44}px;
  background: ${(p) => (p.$active ? 'rgba(255, 255, 255, 0.22)' : 'none')};

  ${(p) =>
    p.$open &&
    css`
      &::after {
        content: '';
        position: absolute;
        bottom: 0;
        left: ${p.$active ? 0 : 5}px;
        right: ${p.$active ? 0 : 5}px;
        height: ${p.$bar || 2}px;
        background: #7fb3dc;
      }
    `}
`;

const TaskSearch = styled.label`
  display: flex;
  align-items: center;
  gap: 9px;
  width: 303px;
  padding-left: 11px;
  background: #f3f3f4;
  color: #333;
  font-size: 12px;

  input {
    flex: 1;
  }

  input::placeholder {
    color: #444;
    opacity: 1;
  }
`;

const Tray = styled.div`
  display: flex;
  align-items: stretch;
  margin-left: auto;
  padding-right: ${(p) => p.$end || 0}px;
`;

const TrayText = styled.div`
  align-self: center;
  width: ${(p) => p.$w}px;
  text-align: center;
  white-space: pre-line;
  font-size: ${(p) => p.$font || 10}px;
  line-height: ${(p) => p.$lh || 16}px;
`;

const OuterTaskbar = styled.footer`
  display: flex;
  align-items: stretch;
  height: 50px;
  background: linear-gradient(90deg, #23231b, #2f2a1f 12%, #24251d 45%, #26221c 60%, #24291f 78%, #2a2a1c 92%, #201f1c);
  color: #fff;
`;

const searchGlyph = (size) => (
  <Icon size={size} box={20} stroke={1.4}><circle cx="12" cy="8" r="6.500" /><path d="M7.500 12.500L1 19" /></Icon>
);
const taskView = (size) => (
  <Icon size={size} box={20} stroke={1.3} d="M2 0v3.500h11V0M2 20v-3.500h11V20M2 6.500h11v7H2zM17.500 0v4M17.500 9.500V20M15.500 7h4" />
);
const wifi = (size) => (
  <Icon size={size} box={18} stroke={1.4} d="M1.500 17A15 15 0 0 1 16.500 2M5.500 17A11 11 0 0 1 16.500 6M9.500 17a7 7 0 0 1 7-7"><circle cx="14.500" cy="15" r="1.500" fill="currentColor" /></Icon>
);
const speaker = (size) => (
  <Icon size={size} box={18} stroke={1.2} d="M1 6.500h3L8 3v12L4 11.500H1zM10.500 6.500c1.300 1.500 1.300 3.500 0 5M12.500 4.500c2.500 2.500 2.500 6.500 0 9">
    <path opacity=".5" d="M14.500 2.500c3.500 3.500 3.500 9.500 0 13" />
  </Icon>
);
const battery = (size) => (
  <Icon size={size} box={20} stroke={1.4} d="M6 5.500h12v9H4V10M19 8.500v3M1 3v4h4V3M3 7v3"><path d="M6.500 7.500h10v5.500H6z" fill="currentColor" stroke="none" /></Icon>
);
const chevron = (size) => <Icon size={size} box={14} stroke={1.4} d="M1 10l6-6 6 6" />;

function SharedTaskbar() {
  return (
    <InnerTaskbar>
      <TaskButton $w={42} aria-label="Старт"><WindowsLogo size={16} /></TaskButton>
      <TaskSearch>
        {searchGlyph(15)}
        <input aria-label="Търсене" placeholder="Въведете текст за търсене тук" />
      </TaskSearch>
      <TaskButton aria-label="Изглед на задачите">{taskView(14)}</TaskButton>
      <TaskButton aria-label="Edge"><EdgeLogo size={23} id="inner" /></TaskButton>
      <TaskButton $open aria-label="Chrome"><ChromeLogo size={21} /></TaskButton>
      <TaskButton $open aria-label="Файлове"><FolderLogo size={22} /></TaskButton>
      <TaskButton aria-label="Магазин"><StoreLogo /></TaskButton>
      <TaskButton aria-label="Поща"><MailLogo size={22} /></TaskButton>
      <TaskButton $open aria-label="Chrome, профил"><ChromeLogo size={21} badge="Y" /></TaskButton>
      <TaskButton $open aria-label="Архиви"><ArchiveLogo /></TaskButton>
      <TaskButton $open $active aria-label="Word"><WordLogo /></TaskButton>
      <Tray>
        <TaskButton $w={21} aria-label="Скрити икони">{chevron(11)}</TaskButton>
        <TaskButton $w={22} aria-label="Батерия">{battery(15)}</TaskButton>
        <TaskButton $w={22} aria-label="Мрежа">{wifi(11)}</TaskButton>
        <TaskButton $w={20} aria-label="Звук">{speaker(15)}</TaskButton>
        <TrayText $w={35}>{'БГР\nBGPT'}</TrayText>
        <TrayText $w={61}>{'10:27\n8.2.2021 г.'}</TrayText>
        <TaskButton $w={50} aria-label="Известия">
          <Logo width="22" height="22" viewBox="0 0 22 22">
            <path fill="#fff" d="M1 2h14v12H7l-3 3v-3H1z" />
            <path stroke="#1b2a42" d="M3.500 5.500h9M3.500 8h9M3.500 10.500h6" />
            <circle cx="15" cy="15" r="6" fill="#2b3340" stroke="#8a8f96" />
            <text x="15" y="19" fontSize="10" textAnchor="middle" fill="#fff">1</text>
          </Logo>
        </TaskButton>
      </Tray>
    </InnerTaskbar>
  );
}

function DesktopTaskbar() {
  return (
    <OuterTaskbar>
      <TaskButton $w={60} aria-label="Старт"><WindowsLogo /></TaskButton>
      <TaskButton $w={60} aria-label="Търсене">{searchGlyph(21)}</TaskButton>
      <TaskButton $w={60} aria-label="Изглед на задачите">{taskView(20)}</TaskButton>
      <TaskButton $w={66} $open $bar={3} aria-label="Файлове"><FolderLogo /></TaskButton>
      <TaskButton $w={61} aria-label="Internet Explorer"><ExplorerLogo /></TaskButton>
      <TaskButton $w={61} $active $open $bar={3} aria-label="Edge"><EdgeLogo id="outer" /></TaskButton>
      <TaskButton $w={62} aria-label="Поща"><MailLogo size={31} /></TaskButton>
      <TaskButton $w={62} aria-label="Chrome"><ChromeLogo size={28} /></TaskButton>
      <Tray $end={16}>
        <TaskButton $w={60} aria-label="Хора">
          <Icon size={20} box={20} stroke={1.4}><circle cx="13" cy="5" r="3.500" /><circle cx="5.500" cy="10.500" r="3" /><path d="M9 13c0-6 10-6 10 0M1 19c0-7 9-7 9 0" /></Icon>
        </TaskButton>
        <TaskButton $w={30} aria-label="Скрити икони">{chevron(17)}</TaskButton>
        <TaskButton $w={30} aria-label="Камера">
          <Icon size={18} box={18} stroke={1.3} d="M3.500 5h7.500v8H3.500zM11 8l4-2v6l-4-2M3.500 2.500c3-2 7-2 10 0M3.500 15.500c3 2 7 2 10 0" />
        </TaskButton>
        <TaskButton $w={30} aria-label="Мрежа">{wifi(17)}</TaskButton>
        <TaskButton $w={30} aria-label="OneDrive">
          <Logo width="22" height="18" viewBox="0 0 22 18">
            <path fill="#b9b9b9" d="M2 13C0 9 3 6.500 6 7c1-5 9-5 10 0L8 15H4z" />
            <path fill="#fff" d="M7 15c-3-3 0-7 4-5 2-4 7-3 7.500.5C22 11 22 15 18.500 15z" />
          </Logo>
        </TaskButton>
        <TaskButton $w={30} aria-label="Батерия">{battery(21)}</TaskButton>
        <TaskButton $w={30} aria-label="Звук">{speaker(20)}</TaskButton>
        <TrayText $w={44} $font={14} $lh={22}>{'БГР\nBG'}</TrayText>
        <TrayText $w={92} $font={14} $lh={22}>{'10:27\n8.2.2021 г.'}</TrayText>
        <TaskButton $w={50} aria-label="Известия">
          <Icon size={22} box={22} stroke={1.3} d="M13 17H9l-3 3v-3H1V1.500h19V12M13 20c0-4 5-3 5-8 3 4 3 9-2 9-2 0-3-.500-3-1z" />
        </TaskButton>
      </Tray>
    </OuterTaskbar>
  );
}

/* ---------- meet controls ---------- */

const Controls = styled.div`
  display: grid;
  grid-template-columns: 1fr auto 1fr;
  align-items: center;
  height: 114px;
  background: #fff;
  color: #3c4043;
  font-family: ${meet};
`;

const MeetingCode = styled.button`
  display: flex;
  align-items: center;
  justify-self: start;
  gap: 18px;
  padding-left: 32px;
  font-family: Lato, sans-serif;
  font-size: 24px;
`;

const CallButtons = styled.div`
  display: flex;
  gap: 20px;
`;

const RoundButton = styled.button`
  display: flex;
  align-items: center;
  justify-content: center;
  width: 74px;
  height: 74px;
  border-radius: 50%;
  border: ${(p) => (p.$plain ? '1px solid #dadce0' : 'none')};
  background: ${(p) => (p.$plain ? '#fff' : '#d93025')};
  color: ${(p) => (p.$plain ? '#d93025' : '#fff')};
`;

const Actions = styled.div`
  display: flex;
  align-items: center;
  justify-content: flex-end;
`;

const Action = styled.button`
  display: flex;
  flex-direction: column;
  align-items: center;
  gap: ${(p) => p.$gap}px;
  width: 187px;
  padding-bottom: 4px;
  font-size: 18px;
  line-height: 23px;

  svg {
    color: #5f6368;
  }
`;

function MeetControls() {
  return (
    <Controls>
      <MeetingCode>
        apxm65u6wy
        <Icon size={19} box={19} stroke={2.6} d="M2 14l7.500-8 7.500 8" />
      </MeetingCode>
      <CallButtons>
        <RoundButton aria-label="Микрофон"><MdOutlineMicOff size={31} /></RoundButton>
        <RoundButton $plain aria-label="Край"><MdCallEnd size={32} /></RoundButton>
        <RoundButton aria-label="Камера"><MdOutlineVideocamOff size={33} /></RoundButton>
      </CallButtons>
      <Actions>
        <Action $gap={3}>
          <MdOutlinePanTool size={32} />
          Вдигане на ръка
        </Action>
        <Action $gap={6}>
          <Icon size={30} box={30} stroke={2.6} d="M2 4h26v22H2z">
            <path d="M15 21v-9M11 14l4-4 4 4" />
          </Icon>
          <span>Yanushka Uzunova<br />представя</span>
        </Action>
        <PlainButton $w={82} aria-label="Още"><MdMoreVert size={33} /></PlainButton>
      </Actions>
    </Controls>
  );
}

export default function App() {
  return (
    <Screen>
      <GlobalStyle />
      <Browser />
      <MeetTop />
      <Stage>
        <Shared>
          <WordRibbon />
          <WordDocument />
          <WordStatus />
          <SharedTaskbar />
          <SharingBar>
            <Grip />
            meet.google.com is sharing your screen.
            <StopButton>Stop sharing</StopButton>
            <a href="#">Hide</a>
          </SharingBar>
          <Pointer><Icon size={14} box={10} d="M2 .5h2l1 1 1-1h2M5 1v8M2 9.500h2l1-1 1 1h2" stroke={0.7} /></Pointer>
        </Shared>
        <People>
          {people.map((p) => (
            <Person key={p.name} $talking={p.talking}>
              <Avatar $size={86} $color={p.color} $font={46}>{p.name[0]}</Avatar>
              <PersonName>
                {p.talking ? (
                  <Talking><i /><i /><i /></Talking>
                ) : (
                  <MutedBadge $size={34}><MdMicOff size={21} /></MutedBadge>
                )}
                {p.name}
              </PersonName>
            </Person>
          ))}
        </People>
      </Stage>
      <MeetControls />
      <DesktopTaskbar />
    </Screen>
  );
}
